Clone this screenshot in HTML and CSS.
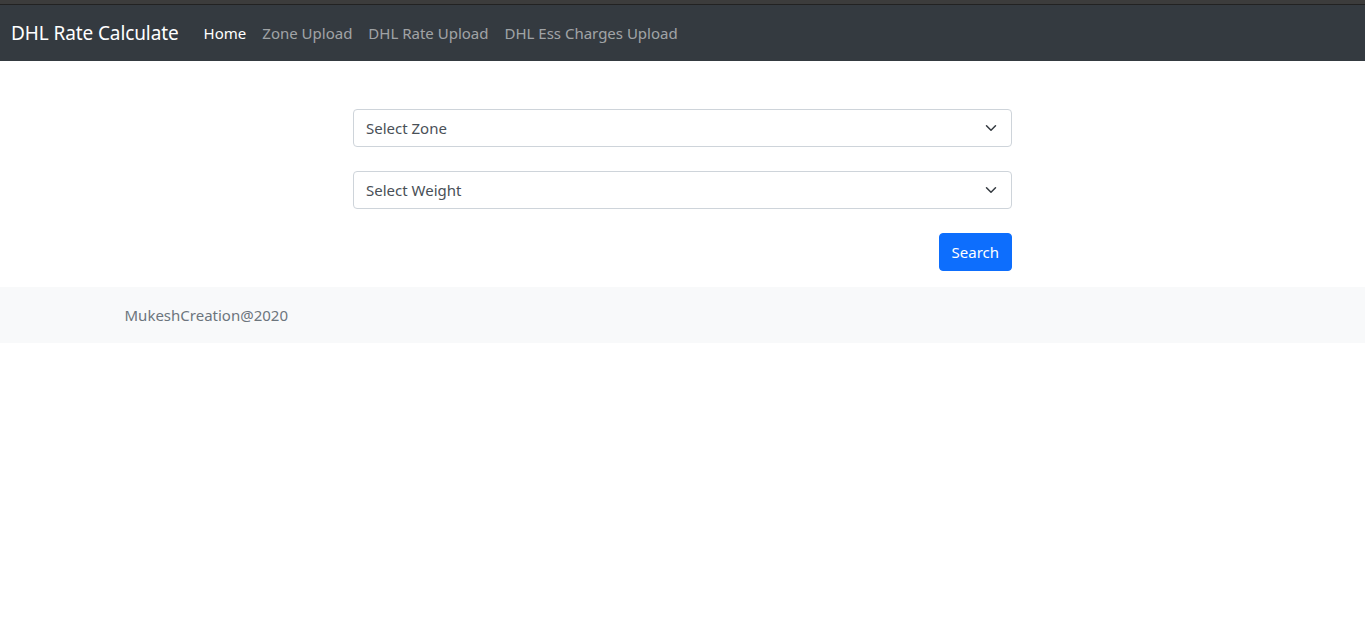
FILE: index.html
```html
<!DOCTYPE html>
<html lang="en">
<head>
<meta charset="utf-8">
<title>DHL Rate Calculate</title>
<link rel="stylesheet" href="styles.css">
</head>
<body>
<div class="topstrip"></div>
<nav class="navbar">
  <a class="brand" href="#">DHL Rate Calculate</a>
  <ul class="nav">
    <li><a class="active" href="#">Home</a></li>
    <li><a href="#">Zone Upload</a></li>
    <li><a href="#">DHL Rate Upload</a></li>
    <li><a href="#">DHL Ess Charges Upload</a></li>
  </ul>
</nav>
<main class="main">
  <form class="form">
    <div class="select-wrap">
      <select class="select"><option>Select Zone</option></select>
      <svg class="chev" viewBox="0 0 16 16" width="16" height="16"><path d="M2 5l6 6 6-6" fill="none" stroke="#343a40" stroke-width="2" stroke-linecap="round" stroke-linejoin="round"/></svg>
    </div>
    <div class="select-wrap">
      <select class="select"><option>Select Weight</option></select>
      <svg class="chev" viewBox="0 0 16 16" width="16" height="16"><path d="M2 5l6 6 6-6" fill="none" stroke="#343a40" stroke-width="2" stroke-linecap="round" stroke-linejoin="round"/></svg>
    </div>
    <div class="actions">
      <button type="button" class="btn">Search</button>
    </div>
  </form>
</main>
<footer class="footer">
  <div class="footer-inner">MukeshCreation@2020</div>
</footer>
</body>
</html>
```
FILE: styles.css
```css
* { box-sizing: border-box; }
body {
  margin: 0;
  font-family: "Noto Sans", "Open Sans", sans-serif;
  font-size: 16px;
  line-height: 1.5;
  color: #212529;
  background: #fff;
}
.topstrip {
  height: 5px;
  background: #3c3c3c;
  border-bottom: 1px solid #222;
}
.navbar {
  height: 56px;
  background: #343a40;
  display: flex;
  align-items: center;
  padding: 0 12px 0 11px;
}
.brand {
  color: #fff;
  text-decoration: none;
  font-size: 19px;
  letter-spacing: -0.1px;
  margin-right: 17px;
  line-height: 30px;
}
.nav {
  list-style: none;
  display: flex;
  margin: 0;
  padding: 0;
}
.nav a {
  display: block;
  padding: 8px 8px;
  font-size: 15px;
  color: rgba(255,255,255,0.55);
  text-decoration: none;
}
.nav a.active { color: #fff; }
.main {
  display: flex;
  justify-content: center;
  padding-top: 48px;
}
.form {
  width: 659px;
  display: flex;
  flex-direction: column;
  gap: 24px;
}
.select-wrap {
  position: relative;
}
.select {
  width: 100%;
  height: 38px;
  appearance: none;
  -webkit-appearance: none;
  border: 1px solid #ced4da;
  border-radius: 4px;
  background: #fff;
  padding: 0 36px 0 12px;
  font-family: inherit;
  font-size: 15px;
  color: #495057;
}
.chev {
  position: absolute;
  right: 15px;
  top: 13px;
  width: 12px;
  height: 12px;
  pointer-events: none;
}
.actions {
  display: flex;
  justify-content: flex-end;
}
.btn {
  height: 38px;
  padding: 0 12px;
  background: #0d6efd;
  color: #fff;
  border: 1px solid #0d6efd;
  border-radius: 4px;
  font-family: inherit;
  font-size: 15px;
}
.footer {
  margin-top: 16px;
  background: #f8f9fa;
  height: 56px;
  display: flex;
  justify-content: center;
  align-items: center;
}
.footer-inner {
  width: 1140px;
  padding: 0 12px;
  color: #6c757d;
  font-size: 15px;
}
```
